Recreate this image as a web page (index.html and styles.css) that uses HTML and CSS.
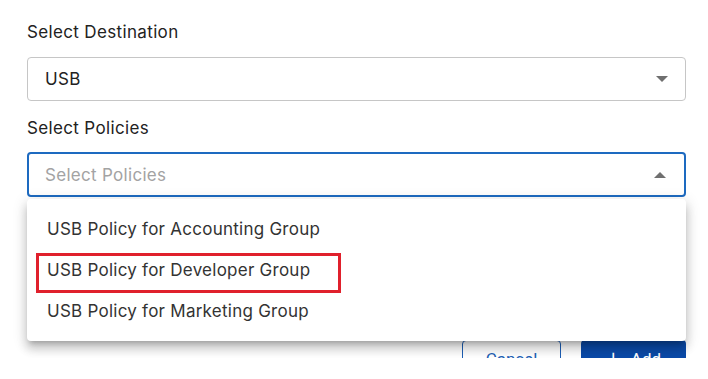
FILE: index.html
```html
<!DOCTYPE html>
<html lang="en">
<head>
<meta charset="UTF-8" />
<meta name="viewport" content="width=device-width, initial-scale=1" />
<title>Add Policy</title>
<link rel="stylesheet" href="styles.css">
</head>
<body>

<div class="screen">
  <div class="form">
    <label class="field-label">Select Destination</label>
    <div class="select">
      <span class="value">USB</span>
      <span class="arrow down"></span>
    </div>

    <label class="field-label second">Select Policies</label>
    <div class="select-wrap">
      <div class="select open">
        <span class="placeholder">Select Policies</span>
        <span class="arrow up"></span>
      </div>

      <!-- open dropdown menu -->
      <ul class="menu">
        <li>USB Policy for Accounting Group</li>
        <li>USB Policy for Developer Group</li>
        <li>USB Policy for Marketing Group</li>
        <span class="highlight"></span>
      </ul>
    </div>

    <div class="actions">
      <button class="btn outline">Cancel</button>
      <button class="btn solid"><span class="plus">+</span> Add</button>
    </div>
  </div>
</div>

</body>
</html>
```

FILE: styles.css
```css
body { margin: 0; background: #fff; font-family: Inter, "Open Sans", sans-serif; }
.screen { height: 358px; overflow: hidden; }
.form { width: 659px; padding: 20px 0 0 27px; }

.field-label { display: block; font-size: 17px; letter-spacing: 0.35px; line-height: 24px; color: #222; }
.field-label.second { margin-top: 15px; }

.select {
  box-sizing: border-box; height: 44px; margin-top: 13px;
  border: 1px solid #c6c6c6; border-radius: 4px;
  display: flex; align-items: center; justify-content: space-between;
  padding: 0 17px 0 17px; font-size: 17px; letter-spacing: 0.3px; color: #222;
}
.select.open { height: 45px; margin-top: 12px; border: 2px solid #1d6ac0; padding: 0 18px 0 16px; }
.placeholder { color: #a3a3a3; }

.arrow { width: 0; height: 0; border-left: 6px solid transparent; border-right: 6px solid transparent; }
.arrow.down { border-top: 6px solid #6f6f6f; }
.arrow.up { border-bottom: 6px solid #6f6f6f; }

.select-wrap { position: relative; }

.menu {
  position: absolute; top: 47px; left: 0; right: 0; z-index: 2;
  margin: 0; padding: 10px 0 9px; list-style: none;
  background: #fff; border-radius: 4px;
  box-shadow: 0 5px 5px -3px rgba(0,0,0,0.2), 0 8px 10px 1px rgba(0,0,0,0.14), 0 3px 14px 2px rgba(0,0,0,0.12);
}
.menu li { height: 41px; line-height: 41px; padding-left: 20px; font-size: 17px; letter-spacing: 0.25px; color: #333; }
.highlight {
  position: absolute; top: 54px; left: 9px; width: 305px; height: 40px;
  box-sizing: border-box; border: 3px solid #e0202c;
}

.actions { display: flex; justify-content: flex-end; gap: 20px; margin-top: 143px; }
.btn {
  height: 38px; font-family: Roboto, "Liberation Sans", sans-serif; font-size: 17px;
  border-radius: 4px; padding: 0; cursor: pointer;
}
.btn.outline { width: 99px; background: #fff; color: #1d5fb5; border: 1px solid #1d5fb5; }
.btn.solid { width: 105px; background: #0b4aa8; color: #fff; border: none; }
.plus { font-size: 26px; font-weight: 300; vertical-align: -3px; margin-right: 6px; }
```
